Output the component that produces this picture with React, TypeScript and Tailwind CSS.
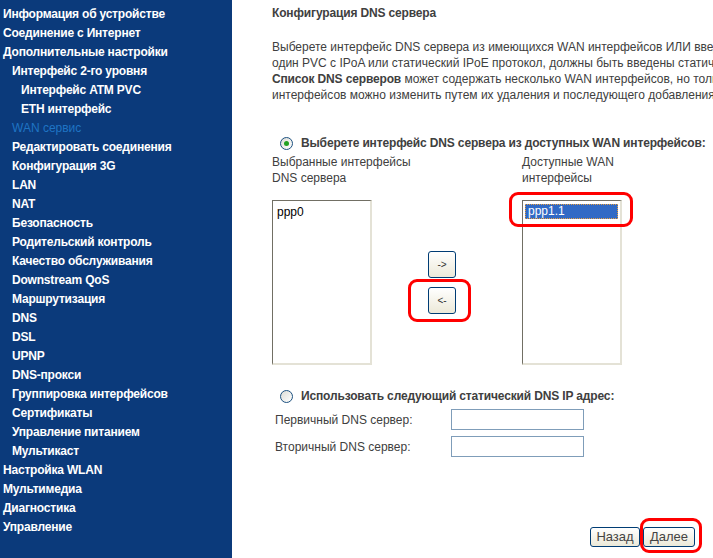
import React from "react";

type Item = { label: string; level: number; active?: boolean };

const items: Item[] = [
  { label: "Информация об устройстве", level: 0 },
  { label: "Соединение с Интернет", level: 0 },
  { label: "Дополнительные настройки", level: 0 },
  { label: "Интерфейс 2-го уровня", level: 1 },
  { label: "Интерфейс ATM PVC", level: 2 },
  { label: "ETH интерфейс", level: 2 },
  { label: "WAN сервис", level: 1, active: true },
  { label: "Редактировать соединения", level: 1 },
  { label: "Конфигурация 3G", level: 1 },
  { label: "LAN", level: 1 },
  { label: "NAT", level: 1 },
  { label: "Безопасность", level: 1 },
  { label: "Родительский контроль", level: 1 },
  { label: "Качество обслуживания", level: 1 },
  { label: "Downstream QoS", level: 1 },
  { label: "Маршрутизация", level: 1 },
  { label: "DNS", level: 1 },
  { label: "DSL", level: 1 },
  { label: "UPNP", level: 1 },
  { label: "DNS-прокси", level: 1 },
  { label: "Группировка интерфейсов", level: 1 },
  { label: "Сертификаты", level: 1 },
  { label: "Управление питанием", level: 1 },
  { label: "Мультикаст", level: 1 },
  { label: "Настройка WLAN", level: 0 },
  { label: "Мультимедиа", level: 0 },
  { label: "Диагностика", level: 0 },
  { label: "Управление", level: 0 },
];

function Radio({ checked }: { checked?: boolean }) {
  return (
    <span className="w-[13px] h-[13px] rounded-full border border-[#1c5180] bg-gradient-to-br from-[#dcdcd6] to-white flex items-center justify-center shrink-0">
      {checked && <span className="w-[5px] h-[5px] rounded-full bg-[#21a121]" />}
    </span>
  );
}

function XpButton({ children, className }: { children: React.ReactNode; className: string }) {
  return (
    <div
      className={
        "border border-[#003c74] rounded-[3px] bg-gradient-to-b from-white to-[#ece9d8] flex items-center justify-center text-[#333] " +
        className
      }
    >
      {children}
    </div>
  );
}

export default function App() {
  return (
    <div className="relative w-[713px] h-[558px] overflow-hidden bg-white flex font-['Liberation_Sans',Arial,sans-serif]">
      <div className="w-[232px] h-[558px] shrink-0 bg-[#0b3a7b] pt-[5px]">
        {items.map((it) => (
          <div
            key={it.label}
            className={
              "h-[19px] leading-[19px] text-[12px] whitespace-nowrap " +
              (it.level === 0 ? "pl-[3px] " : it.level === 1 ? "pl-[12px] " : "pl-[21px] ") +
              (it.active ? "text-[#1f74c4] font-normal" : "text-white font-bold tracking-[-0.2px]")
            }
          >
            {it.label}
          </div>
        ))}
      </div>

      <div className="flex-1 min-w-0 pl-[40px] pt-[6px] text-[#404040] text-[12px] overflow-hidden">
        <div className="h-[14px] leading-[14px] font-bold tracking-[-0.15px] whitespace-nowrap">Конфигурация DNS сервера</div>

        <div className="mt-[19px] leading-[16px] whitespace-nowrap">
          <div>Выберете интерфейс DNS сервера из имеющихся WAN интерфейсов ИЛИ введите статические IP адреса DNS сервера.</div>
          <div>один PVC с IPoA или статический IPoE протокол, должны быть введены статические IP адреса DNS сервера.</div>
          <div>
            <span className="font-bold tracking-[-0.15px]">Список DNS серверов</span> может содержать несколько WAN интерфейсов, но только один
          </div>
          <div>интерфейсов можно изменить путем их удаления и последующего добавления.</div>
        </div>

        <div className="mt-[32px] h-[16px] flex items-center pl-[8px] gap-[8px] whitespace-nowrap">
          <Radio checked />
          <span className="font-bold tracking-[-0.15px]">Выберете интерфейс DNS сервера из доступных WAN интерфейсов:</span>
        </div>

        <div className="mt-[3px] flex">
          <div className="w-[156px] shrink-0">
            <div className="leading-[16px] h-[32px]">
              <div className="whitespace-nowrap">Выбранные интерфейсы</div>
              <div>DNS сервера</div>
            </div>
            <div className="mt-[14px] w-[100px] h-[165px] border-l border-t border-l-[#716f64] border-t-[#716f64] border-r-2 border-b-2 border-r-[#e4e2d6] border-b-[#e4e2d6] pl-[4px] pt-[4px] text-black leading-[15px]">
              ppp0
            </div>
          </div>
          <div className="w-[94px] shrink-0 pt-[97px] flex flex-col gap-[9px]">
            <XpButton className="w-[28px] h-[27px] text-[10px]">-&gt;</XpButton>
            <XpButton className="w-[28px] h-[27px] text-[10px]">&lt;-</XpButton>
          </div>
          <div className="w-[150px] shrink-0">
            <div className="leading-[16px] h-[32px]">
              <div>Доступные WAN</div>
              <div>интерфейсы</div>
            </div>
            <div className="mt-[14px] w-[100px] h-[165px] border-l border-t border-l-[#716f64] border-t-[#716f64] border-r-2 border-b-2 border-r-[#e4e2d6] border-b-[#e4e2d6] pl-[2px] pr-[2px] pt-[3px]">
              <div className="h-[15px] leading-[13px] bg-[#316ac5] text-white border border-dotted border-[#e8a040] pl-[2px]">
                ppp1.1
              </div>
            </div>
          </div>
        </div>

        <div className="mt-[23px] h-[16px] flex items-center pl-[8px] gap-[8px] whitespace-nowrap">
          <Radio />
          <span className="font-bold tracking-[-0.15px]">Использовать следующий статический DNS IP адрес:</span>
        </div>

        <div className="mt-[5px] flex flex-col gap-[6px]">
          <div className="flex items-center h-[21px]">
            <span className="w-[179px] pl-[3px] whitespace-nowrap">Первичный DNS сервер:</span>
            <div className="w-[133px] h-[21px] border border-[#7f9db9] bg-white" />
          </div>
          <div className="flex items-center h-[21px]">
            <span className="w-[179px] pl-[3px] whitespace-nowrap">Вторичный DNS сервер:</span>
            <div className="w-[133px] h-[21px] border border-[#7f9db9] bg-white" />
          </div>
        </div>

        <div className="mt-[70px] flex justify-end pr-[18px] gap-[3px]">
          <XpButton className="w-[50px] h-[20px] text-[13px] text-[#444]">Назад</XpButton>
          <XpButton className="w-[52px] h-[20px] text-[13px] text-[#444]">Далее</XpButton>
        </div>
      </div>

      <div className="absolute left-[509px] top-[192px] w-[124px] h-[35px] border-[3px] border-[#ff0000] rounded-[9px]" />
      <div className="absolute left-[408px] top-[279px] w-[63px] h-[43px] border-[3px] border-[#ff0000] rounded-[9px]" />
      <div className="absolute left-[640px] top-[518px] w-[62px] h-[35px] border-[3px] border-[#ff0000] rounded-[9px]" />
    </div>
  );
}
